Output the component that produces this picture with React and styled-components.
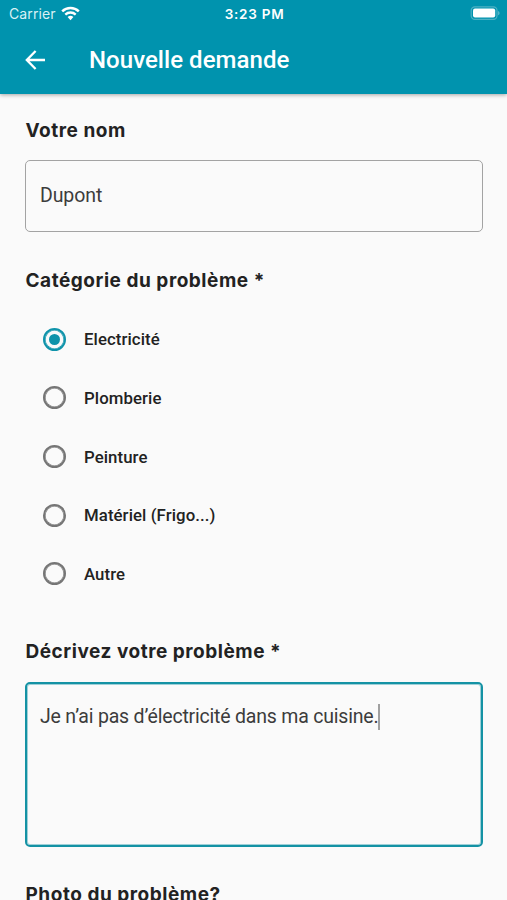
import React, { Component } from 'react'
import styled, { createGlobalStyle } from 'styled-components'

const GlobalStyle = createGlobalStyle`
  * {
    box-sizing: border-box;
  }
  body {
    margin: 0;
    background: #fafafa;
  }
`

const Screen = styled.div`
  display: flex;
  flex-direction: column;
  width: 507px;
  height: 900px;
  overflow: hidden;
  background: #fafafa;
  color: #222;
  font-family: Roboto, 'Liberation Sans', sans-serif;
`
const Header = styled.header`
  flex: none;
  height: 94px;
  background: #0093ae;
  color: #fff;
  box-shadow: 0 1px 4px rgba(0, 0, 0, 0.35);
`
const StatusBar = styled.div`
  display: grid;
  grid-template-columns: 1fr auto 1fr;
  align-items: center;
  height: 27px;
  padding: 0 7px 0 9px;
  font-family: Inter, sans-serif;
`
const Carrier = styled.span`
  display: flex;
  align-items: center;
  gap: 5.5px;
  font-size: 14px;
  letter-spacing: 0.1px;
  color: #d9f1f5;
`
const Time = styled.span`
  font-size: 13.5px;
  font-weight: 600;
  letter-spacing: 0.75px;
`
const BatterySlot = styled.span`
  display: flex;
  justify-content: flex-end;
`
const Toolbar = styled.div`
  display: flex;
  align-items: center;
  height: 66px;
  padding-left: 25px;
`
const Title = styled.h1`
  margin: 0 0 0 43px;
  font-size: 24px;
  font-weight: 500;
  line-height: 32px;
  letter-spacing: 0.05px;
`
const Form = styled.form`
  display: flex;
  flex-direction: column;
  padding: 25px 24.5px 0 25px;
`
const Label = styled.h2`
  flex: none;
  margin: 0 0 0 0.5px;
  font-family: Inter, sans-serif;
  font-size: 19px;
  font-weight: 700;
  line-height: 24px;
  letter-spacing: 0.53px;
`
const Field = styled.div`
  display: flex;
  align-items: flex-start;
  flex: none;
  height: ${props => props.$height};
  margin: ${props => props.$margin};
  padding: ${props => (props.$focused ? '20px 13px' : '22px 14px')};
  border: ${props => (props.$focused ? '2px solid #1492a4' : '1px solid #a3a3a3')};
  border-radius: 5px;
  box-shadow: ${props => (props.$focused ? 'inset 0 0 0 1px rgba(20, 146, 164, 0.4)' : 'none')};
  color: #3c3c3c;
  font-size: 19.5px;
  line-height: 26px;
`
const Value = styled.span`
  letter-spacing: ${props => props.$spacing};
  white-space: nowrap;
`
const Caret = styled.span`
  width: 2px;
  height: 26px;
  background: #a0a0a0;
`
const Options = styled.div`
  display: grid;
  grid-template-rows: repeat(5, 58.67px);
  margin: 17px 0 36.6px;
`
const Option = styled.div`
  display: flex;
  align-items: center;
  padding-left: 18px;
  gap: 18px;
  font-size: 16.8px;
  font-weight: 500;
  letter-spacing: 0.08px;
`
const Radio = styled.span`
  display: flex;
  align-items: center;
  justify-content: center;
  width: 23px;
  height: 23px;
  border: 2px solid ${props => (props.$checked ? '#0f93aa' : '#757575')};
  border-radius: 50%;
  box-shadow: inset 0 0 0 0.6px ${props => (props.$checked ? '#0f93aa' : '#757575')};

  &::after {
    content: '';
    width: 11.5px;
    height: 11.5px;
    border-radius: 50%;
    background: ${props => (props.$checked ? '#0f93aa' : 'transparent')};
  }
`

const WifiIcon = () => (
  <svg width="19" height="15" viewBox="0 0 19 15" fill="none">
    <path d="M1.2 5.4a12 12 0 0 1 16.6 0" stroke="#fff" strokeWidth="2.5" />
    <path d="M4.3 8.6a7.5 7.5 0 0 1 10.4 0" stroke="#fff" strokeWidth="2.3" />
    <path d="M6.6 11.1a4.2 4.2 0 0 1 5.8 0L9.5 14.2z" fill="#fff" />
  </svg>
)

const BatteryIcon = () => (
  <svg width="30" height="15" viewBox="0 0 30 15" fill="none">
    <rect x="1.2" y="0.8" width="25.8" height="12.6" rx="3.6" stroke="#4db1c4" strokeWidth="1.2" />
    <rect x="3" y="2.6" width="22.2" height="9" rx="2" fill="#fff" />
    <path d="M28.2 5c1.8.7 1.8 3.6 0 4.3z" fill="#67bdcc" />
  </svg>
)

const BackIcon = () => (
  <svg width="21" height="20" viewBox="0 0 21 20" fill="none">
    <path d="M10.6 1 1.8 10l8.8 9M2 10h18" stroke="#fff" strokeWidth="2.3" />
  </svg>
)

const categories = [
  'Electricité',
  'Plomberie',
  'Peinture',
  'Matériel (Frigo...)',
  'Autre'
]

export default class App extends Component {
  constructor(props) {
    super(props)

    this.state = {
      category: 'Electricité'
    }
  }

  render() {
    return (
      <Screen>
        <GlobalStyle />
        <Header>
          <StatusBar>
            <Carrier>
              Carrier
              <WifiIcon />
            </Carrier>
            <Time>3:23 PM</Time>
            <BatterySlot>
              <BatteryIcon />
            </BatterySlot>
          </StatusBar>
          <Toolbar>
            <BackIcon />
            <Title>Nouvelle demande</Title>
          </Toolbar>
        </Header>
        <Form>
          <Label>Votre nom</Label>
          <Field $height="72px" $margin="17px 0 37px">
            <Value $spacing="-0.1px">Dupont</Value>
          </Field>
          <Label>Catégorie du problème *</Label>
          <Options>
            {categories.map(category => (
              <Option
                key={category}
                onClick={() => this.setState({ category })}
              >
                <Radio $checked={this.state.category === category} />
                {category}
              </Option>
            ))}
          </Options>
          <Label>Décrivez votre problème *</Label>
          <Field $focused $height="165px" $margin="18px 0 36px">
            <Value $spacing="-0.2px">Je n’ai pas d’électricité dans ma cuisine.</Value>
            <Caret />
          </Field>
          <Label>Photo du problème?</Label>
        </Form>
      </Screen>
    )
  }
}
